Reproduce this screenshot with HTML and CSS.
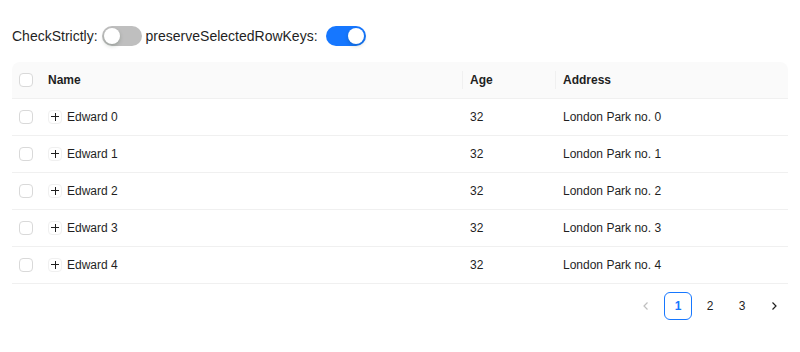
FILE: index.html
```html
<!DOCTYPE html>
<html lang="en">
<head>
    <meta charset="UTF-8">
    <title>Table</title>
    <link rel="stylesheet" href="styles.css">
</head>
<body>
    <div class="controls">
        <span class="label">CheckStrictly:</span>
        <span class="switch"><span class="knob"></span></span>
        <span class="label">preserveSelectedRowKeys:</span>
        <span class="switch on"><span class="knob"></span></span>
    </div>

    <table class="table">
        <thead>
            <tr>
                <th class="sel"><span class="checkbox"></span></th>
                <th class="col-name">Name</th>
                <th class="col-age">Age</th>
                <th class="col-addr">Address</th>
            </tr>
        </thead>
        <tbody>
            <tr>
                <td class="sel"><span class="checkbox"></span></td>
                <td><span class="expand"></span>Edward 0</td>
                <td>32</td>
                <td>London Park no. 0</td>
            </tr>
            <tr>
                <td class="sel"><span class="checkbox"></span></td>
                <td><span class="expand"></span>Edward 1</td>
                <td>32</td>
                <td>London Park no. 1</td>
            </tr>
            <tr>
                <td class="sel"><span class="checkbox"></span></td>
                <td><span class="expand"></span>Edward 2</td>
                <td>32</td>
                <td>London Park no. 2</td>
            </tr>
            <tr>
                <td class="sel"><span class="checkbox"></span></td>
                <td><span class="expand"></span>Edward 3</td>
                <td>32</td>
                <td>London Park no. 3</td>
            </tr>
            <tr>
                <td class="sel"><span class="checkbox"></span></td>
                <td><span class="expand"></span>Edward 4</td>
                <td>32</td>
                <td>London Park no. 4</td>
            </tr>
        </tbody>
    </table>

    <ul class="pagination">
        <li class="page-arrow disabled">
            <svg width="10" height="10" viewBox="0 0 10 10"><path d="M6.5 1.5 L3 5 L6.5 8.5" fill="none" stroke="currentColor" stroke-width="1.2"/></svg>
        </li>
        <li class="page active">1</li>
        <li class="page">2</li>
        <li class="page">3</li>
        <li class="page-arrow">
            <svg width="10" height="10" viewBox="0 0 10 10"><path d="M3.5 1.5 L7 5 L3.5 8.5" fill="none" stroke="currentColor" stroke-width="1.2"/></svg>
        </li>
    </ul>
</body>
</html>
```

FILE: styles.css
```css
* {
    margin: 0;
    padding: 0;
    box-sizing: border-box;
}

body {
    padding: 26px 12px 12px;
    font-family: "Liberation Sans", Arial, sans-serif;
    color: #1f1f1f;
    background: #fff;
}

.controls {
    display: flex;
    align-items: center;
    height: 20px;
    font-size: 14px;
}

.label {
    margin-right: 4px;
}

.label + .switch.on {
    margin-left: 4px;
}

.switch {
    position: relative;
    width: 40px;
    height: 20px;
    border-radius: 10px;
    background: #bfbfbf;
    margin-right: 4px;
}

.switch .knob {
    position: absolute;
    top: 2px;
    left: 2px;
    width: 16px;
    height: 16px;
    border-radius: 50%;
    background: #fff;
    box-shadow: 0 2px 4px rgba(0, 35, 11, 0.2);
}

.switch.on {
    background: #1677ff;
}

.switch.on .knob {
    left: 22px;
}

.table {
    width: 100%;
    margin-top: 16px;
    border-collapse: collapse;
    font-size: 12px;
    table-layout: fixed;
}

.table th,
.table td {
    height: 37px;
    padding: 0 8px;
    text-align: left;
    border-bottom: 1px solid #f0f0f0;
    vertical-align: middle;
}

.table th {
    position: relative;
    height: 36px;
    background: #fafafa;
    font-weight: bold;
}

.table thead th:first-child {
    border-top-left-radius: 8px;
}

.table thead th:last-child {
    border-top-right-radius: 8px;
}

.table th.col-age::before,
.table th.col-addr::before {
    content: "";
    position: absolute;
    left: 0;
    top: 50%;
    width: 1px;
    height: 18px;
    margin-top: -9px;
    background: #f0f0f0;
}

.sel {
    width: 28px;
}

.table .sel {
    padding: 0 0 0 7px;
}

.col-age {
    width: 93px;
}

.col-addr {
    width: 233px;
}

.checkbox {
    display: block;
    width: 14px;
    height: 14px;
    border: 1px solid #d9d9d9;
    border-radius: 4px;
    background: #fff;
}

.expand {
    display: inline-block;
    position: relative;
    width: 14px;
    height: 14px;
    margin: 0 5px 0 0;
    border: 1px solid #f0f0f0;
    border-radius: 4px;
    vertical-align: -3px;
}

.expand::before,
.expand::after {
    content: "";
    position: absolute;
    background: #1f1f1f;
}

.expand::before {
    left: 2px;
    right: 2px;
    top: 5.5px;
    height: 1px;
}

.expand::after {
    top: 2px;
    bottom: 2px;
    left: 5.5px;
    width: 1px;
}

.pagination {
    display: flex;
    justify-content: flex-end;
    gap: 4px;
    margin-top: 8px;
    list-style: none;
    font-size: 12px;
}

.pagination li {
    display: flex;
    align-items: center;
    justify-content: center;
    width: 28px;
    height: 28px;
    border: 1px solid transparent;
    border-radius: 6px;
    color: #1f1f1f;
}

.pagination .active {
    border-color: #1677ff;
    color: #1677ff;
    font-weight: bold;
}

.pagination .disabled {
    color: #bfbfbf;
}
```
